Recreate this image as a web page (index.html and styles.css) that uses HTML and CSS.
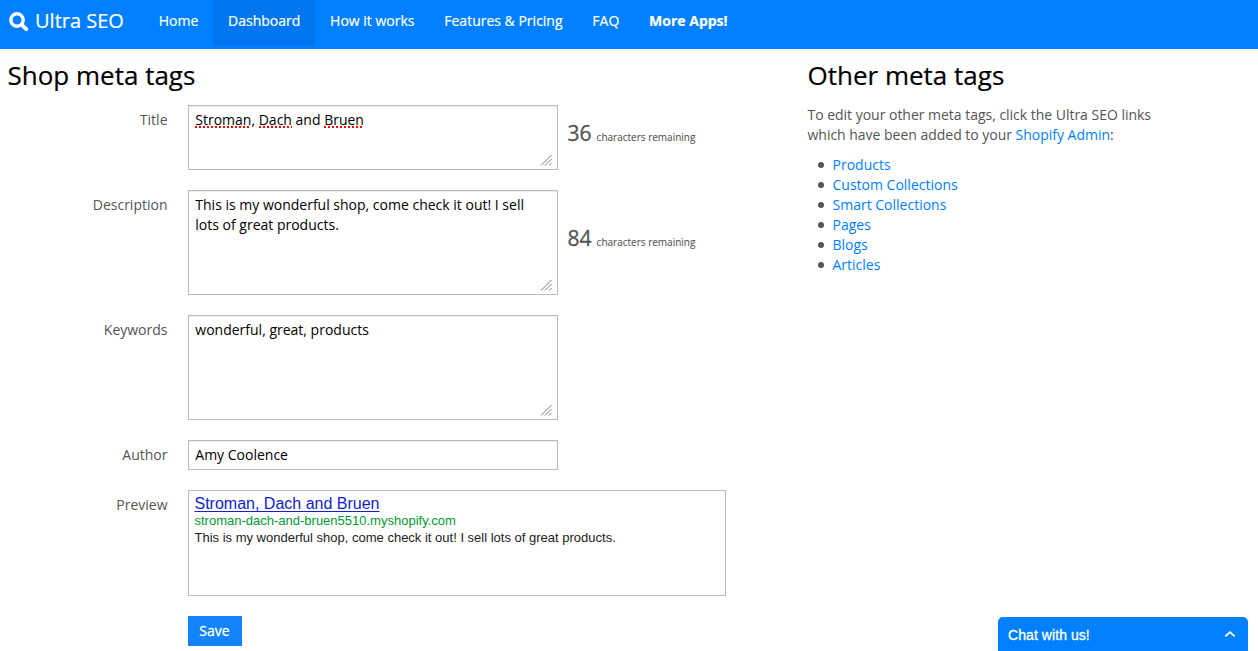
FILE: index.html
```html
<!DOCTYPE html>
<html lang="en">
<head>
<meta charset="utf-8">
<title>Ultra SEO</title>
<link rel="stylesheet" href="styles.css">
</head>
<body>
<header class="navbar">
  <a class="brand"><svg class="brand-icon" width="20" height="20" viewBox="0 0 20 20"><circle cx="8" cy="8" r="6.2" fill="none" stroke="#fff" stroke-width="3.4"/><path d="M12.8 12.8L17.2 17.2" stroke="#fff" stroke-width="4" stroke-linecap="round"/></svg><span class="brand-name">Ultra SEO</span></a>
  <nav class="nav">
    <a class="nav-item">Home</a>
    <a class="nav-item active">Dashboard</a>
    <a class="nav-item">How it works</a>
    <a class="nav-item">Features &amp; Pricing</a>
    <a class="nav-item">FAQ</a>
    <a class="nav-item strong">More Apps!</a>
  </nav>
</header>
<main class="content">
  <section class="shop">
    <h1 class="heading">Shop meta tags</h1>
    <div class="form">
      <div class="row">
        <span class="label">Title</span>
        <div class="field title-field"><span class="typo">Stroman</span>, <span class="typo">Dach</span> and <span class="typo">Bruen</span><svg class="grip" width="12" height="12" viewBox="0 0 12 12"><path d="M1 11.5L11.5 1M5 11.5L11.5 5M9 11.5L11.5 9"/></svg></div>
        <div class="counter"><span class="count">36</span><span class="unit">characters remaining</span></div>
      </div>
      <div class="row">
        <span class="label">Description</span>
        <div class="field tall">This is my wonderful shop, come check it out! I sell lots of great products.<svg class="grip" width="12" height="12" viewBox="0 0 12 12"><path d="M1 11.5L11.5 1M5 11.5L11.5 5M9 11.5L11.5 9"/></svg></div>
        <div class="counter"><span class="count">84</span><span class="unit">characters remaining</span></div>
      </div>
      <div class="row">
        <span class="label">Keywords</span>
        <div class="field tall">wonderful, great, products<svg class="grip" width="12" height="12" viewBox="0 0 12 12"><path d="M1 11.5L11.5 1M5 11.5L11.5 5M9 11.5L11.5 9"/></svg></div>
      </div>
      <div class="row">
        <span class="label">Author</span>
        <div class="field single">Amy Coolence</div>
      </div>
      <div class="row">
        <span class="label">Preview</span>
        <div class="preview">
          <div class="preview-title"><span class="preview-link">Stroman, Dach and Bruen</span></div>
          <div class="preview-url">stroman-dach-and-bruen5510.myshopify.com</div>
          <div class="preview-text">This is my wonderful shop, come check it out! I sell lots of great products.</div>
        </div>
      </div>
      <button class="save">Save</button>
    </div>
  </section>
  <aside class="other">
    <h1 class="heading">Other meta tags</h1>
    <p class="intro">To edit your other meta tags, click the Ultra SEO links<br>which have been added to your <a class="link">Shopify Admin</a>:</p>
    <ul class="links">
      <li class="links-item"><a class="link">Products</a></li>
      <li class="links-item"><a class="link">Custom Collections</a></li>
      <li class="links-item"><a class="link">Smart Collections</a></li>
      <li class="links-item"><a class="link">Pages</a></li>
      <li class="links-item"><a class="link">Blogs</a></li>
      <li class="links-item"><a class="link">Articles</a></li>
    </ul>
  </aside>
</main>
<div class="chat"><span>Chat with us!</span><svg width="12" height="8" viewBox="0 0 12 8"><path d="M1.3 5.4L6 1.2L10.7 5.4" fill="none" stroke="#fff" stroke-width="1.8"/></svg></div>
</body>
</html>
```
FILE: styles.css
```css
* { box-sizing: border-box; }
body {
  margin: 0;
  height: 651px;
  overflow: hidden;
  background: #fff;
  color: #555;
  font: 14px/20px "Open Sans", sans-serif;
}
.navbar {
  display: flex;
  align-items: flex-start;
  height: 49px;
  background: #007fff;
  color: #fff;
}
.brand {
  display: flex;
  width: 143.8px;
  padding: 11px 0 0 9px;
}
.brand-icon { margin-top: 1px; }
.brand-name { margin-left: 6px; font-size: 20px; white-space: nowrap; -webkit-text-stroke: .2px #fff; }
.nav { display: flex; -webkit-text-stroke: .2px #fff; }
.nav-item { padding: 11px 14.9px 15px; white-space: nowrap; }
.active { background: #0077f0; }
.strong { font-weight: 700; }
.content { display: flex; padding-left: 7.5px; }
.shop { width: 800px; }
.heading {
  margin: 6px 0 10px;
  color: #000;
  font-size: 26px;
  font-weight: 400;
  line-height: 40px;
  -webkit-text-stroke: .2px #000;
}
.form { display: flex; flex-direction: column; gap: 20px; }
.row { display: flex; }
.label { width: 160px; margin-right: 20.5px; padding-top: 5px; text-align: right; }
.field {
  position: relative;
  width: 370px;
  padding: 4px 20px 4px 6.3px;
  border: 1px solid #bbb;
  box-shadow: inset 0 1px 1px rgba(0, 0, 0, .075);
  color: #000;
}
.title-field { height: 65px; }
.tall { height: 105px; }
.single { height: 30px; }
.typo {
  background: repeating-linear-gradient(90deg, #f00 0 2px, transparent 2px 4px) left bottom 1px / 100% 2px no-repeat;
}
.grip { position: absolute; right: 5px; bottom: 3px; fill: none; stroke: #777; stroke-width: 1; }
.counter { display: flex; align-items: baseline; align-self: center; margin-left: 9.6px; padding-bottom: 6px; }
.count { font-size: 21px; -webkit-text-stroke: .3px #555; }
.unit { margin-left: 5px; font-size: 10px; -webkit-text-stroke: .1px #555; }
.preview {
  width: 538px;
  height: 106px;
  padding: 4px 5.5px;
  border: 1px solid #bbb;
  color: #222;
  font: 13px/17px "Liberation Sans", Arial, sans-serif;
}
.preview-title { color: #12c; font-size: 16px; }
.preview-link { text-decoration: underline; text-decoration-thickness: 1px; text-underline-offset: 2px; text-decoration-skip-ink: none; }
.preview-url { color: #093; }
.save {
  width: 54px;
  height: 30px;
  margin-left: 180.5px;
  padding: 0 1px 0 0;
  border: 0;
  background: #1283fa;
  color: #fff;
  font: inherit;
  -webkit-text-stroke: .3px #fff;
}
.intro { margin: 0 0 10px; letter-spacing: -.02px; }
.link { color: #007fff; }
.links { margin: 0; padding-left: 10.5px; list-style: none; }
.links-item { display: flex; align-items: center; }
.links-item::before {
  content: "";
  width: 6px;
  height: 6px;
  margin: 0 8.5px 0 0;
  border-radius: 50%;
  background: #555;
}
.chat {
  position: absolute;
  right: 10px;
  bottom: 0;
  display: flex;
  align-items: center;
  justify-content: space-between;
  width: 250px;
  height: 34px;
  padding: 2px 12px 0 10px;
  border-radius: 5px 5px 0 0;
  background: #007fff;
  color: #fff;
  font: 14px/20px "Liberation Sans", Arial, sans-serif;
  letter-spacing: .07px;
  -webkit-text-stroke: .3px #fff;
}
```
